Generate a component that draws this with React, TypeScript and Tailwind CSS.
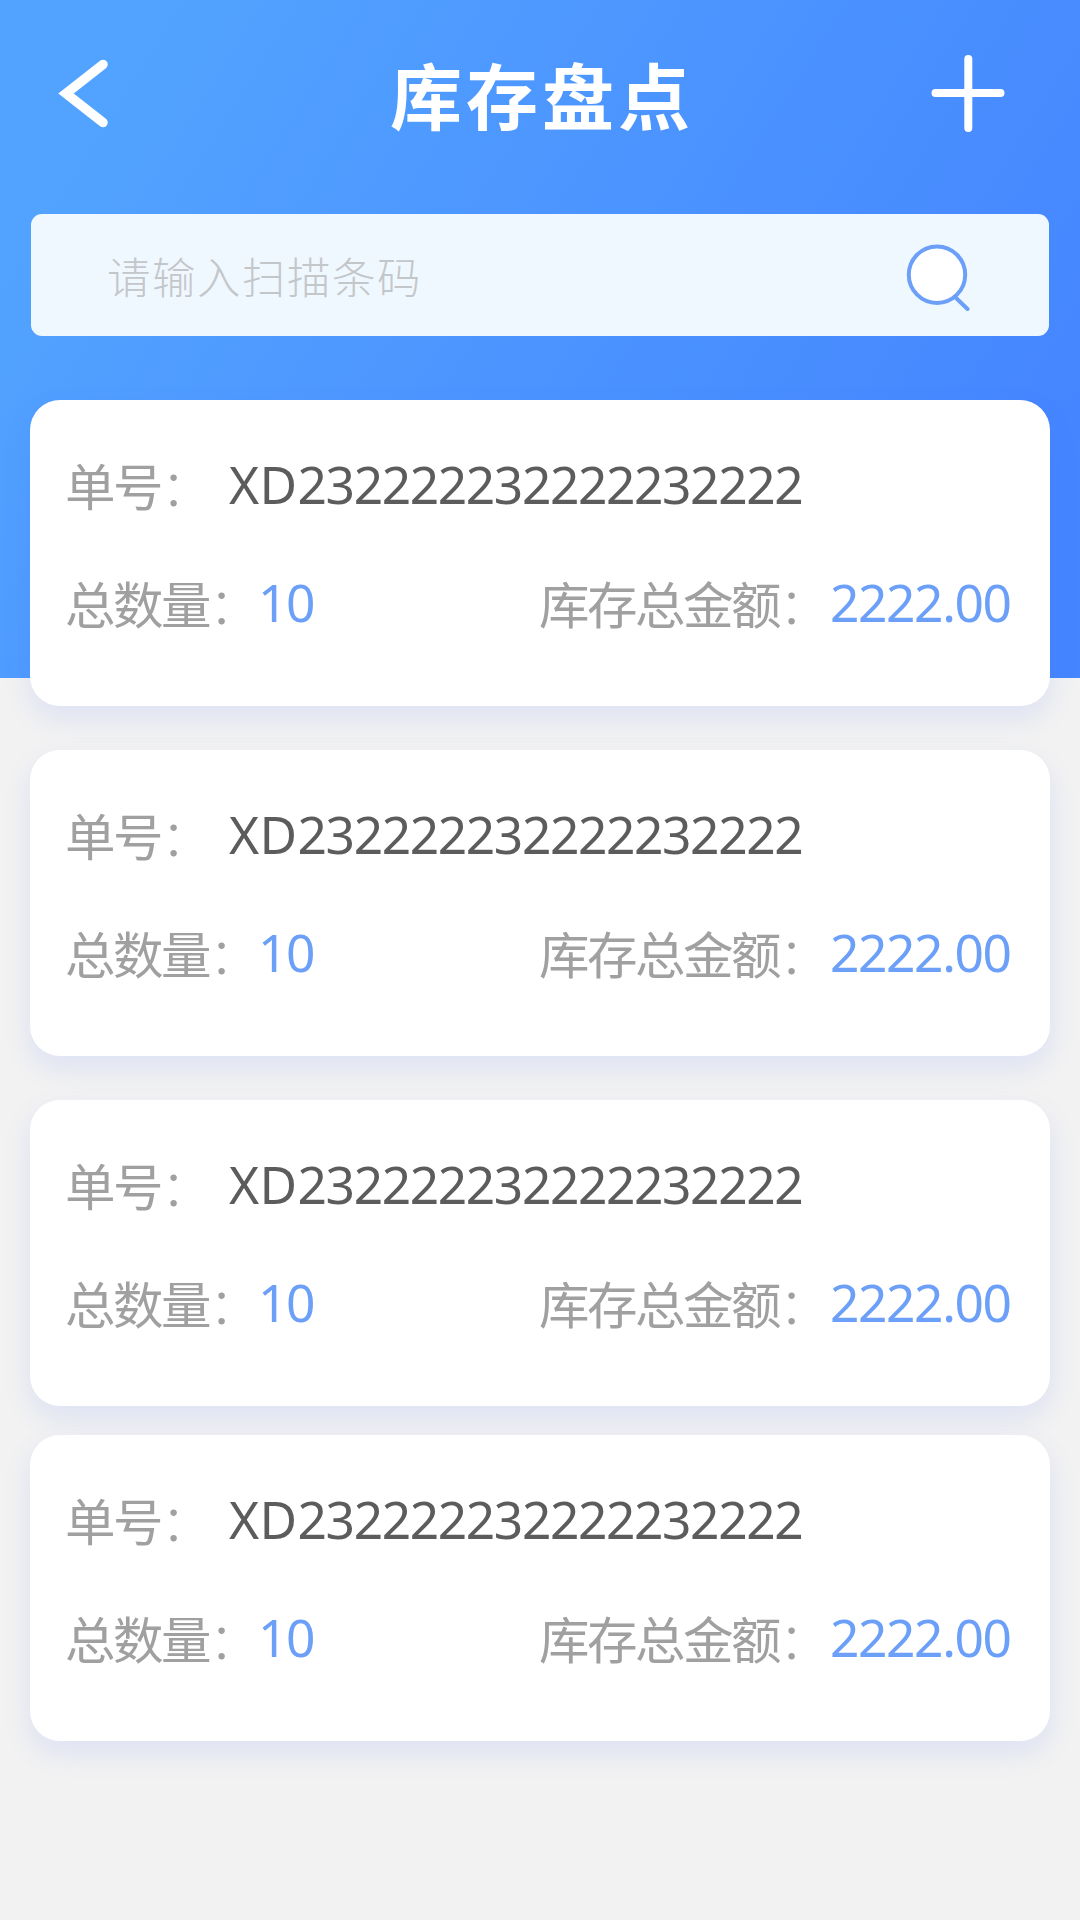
const orders = [
  { id: 1, prefix: "XD", no: "232222232222232222", count: "10", amount: "2222.00", gap: "mt-0" },
  { id: 2, prefix: "XD", no: "232222232222232222", count: "10", amount: "2222.00", gap: "mt-11" },
  { id: 3, prefix: "XD", no: "232222232222232222", count: "10", amount: "2222.00", gap: "mt-11" },
  { id: 4, prefix: "XD", no: "232222232222232222", count: "10", amount: "2222.00", gap: "mt-[29px]" },
];

type Order = (typeof orders)[number];

const label = "whitespace-nowrap font-['Noto_Sans_CJK_SC',sans-serif] text-[50.5px] tracking-[-2.5px] text-[#a0a0a0]";
const value = "whitespace-nowrap font-['Noto_Sans',sans-serif] text-[51.5px] tracking-[-1.42px]";

function Label({ text, width }: { text: string; width: string }) {
  return (
    <span className={`${label} ${width}`}>
      {text}
      <span className="font-light">：</span>
    </span>
  );
}

function OrderCard({ order }: { order: Order }) {
  return (
    <article
      className={`${order.gap} h-[306px] rounded-[30px] bg-white pt-[48px] pl-[35px] pr-[39px] shadow-[0_12px_28px_rgba(70,110,255,0.12)]`}
    >
      <div className="flex h-[74px] items-center">
        <Label text="单号" width="w-[164px]" />
        <span className={`${value} text-[#5c5c5c]`}>
          <span className="tracking-[0.4px]">{order.prefix}</span>
          {order.no}
        </span>
      </div>
      <div className="mt-11 flex h-[74px] items-center">
        <Label text="总数量" width="w-[193px]" />
        <span className={`${value} w-[281px] text-[#6b9ff8]`}>{order.count}</span>
        <Label text="库存总金额" width="w-[291px]" />
        <span className={`${value} text-[#6b9ff8]`}>{order.amount}</span>
      </div>
    </article>
  );
}

export default function App() {
  return (
    <div className="h-[1920px] w-[1080px] overflow-hidden bg-[#f2f2f2]">
      <header className="h-[678px] bg-[linear-gradient(122deg,#52a3ff_10%,#4585ff_90%)]">
        <div className="flex h-[214px] items-start justify-between pl-[58px] pr-[75px]">
          <button aria-label="返回" className="mt-[58px]">
            <svg width="52" height="72" viewBox="0 0 52 72" fill="none" stroke="#fff" strokeWidth="9.5" strokeLinecap="round">
              <path d="M45 6.500 8 35.500 45 64.500" strokeMiterlimit="10" />
            </svg>
          </button>
          <h1 className="mt-[41px] ml-[43px] font-['Noto_Sans_CJK_SC',sans-serif] text-[72px] leading-[104px] font-bold tracking-[4px] text-white">
            库存盘点
          </h1>
          <button aria-label="新增" className="mt-[54px]">
            <svg width="74" height="80" viewBox="0 0 74 80" stroke="#fff" strokeWidth="8" strokeLinecap="round">
              <path d="M37.300 5V74M4.500 39H69.500" />
            </svg>
          </button>
        </div>
        <div className="mx-[31px] flex h-[122px] items-center justify-between rounded-[11px] bg-[#f0f8ff] pl-[76px] pr-[76px]">
          <span className="pt-px font-['Noto_Sans_CJK_SC',sans-serif] text-[43.5px] leading-[62px] font-light tracking-[1.5px] text-[#c4c7ca]">
            请输入扫描条码
          </span>
          <svg width="70" height="72" viewBox="0 0 70 72" fill="none" stroke="#6b9ff8" strokeWidth="4" strokeLinecap="round">
            <circle cx="34" cy="35.700" r="28.200" fill="#fff" />
            <path d="M52.500 58.500 64.500 70" />
          </svg>
        </div>
      </header>
      <main className="relative -mt-[278px] px-[30px]">
        {orders.map((order) => (
          <OrderCard key={order.id} order={order} />
        ))}
      </main>
    </div>
  );
}
